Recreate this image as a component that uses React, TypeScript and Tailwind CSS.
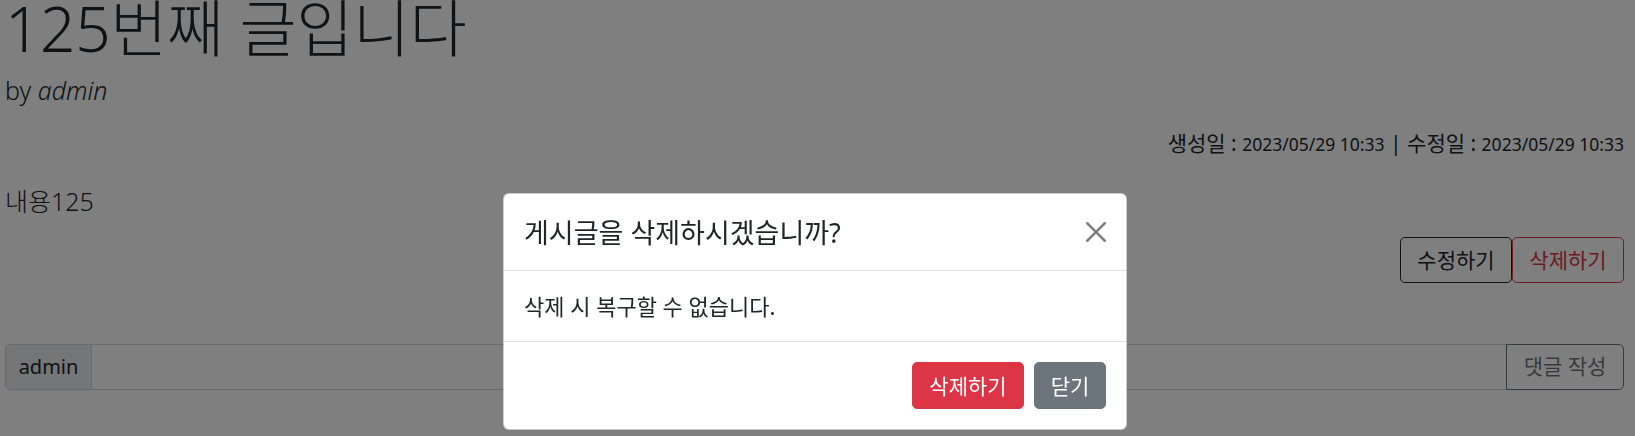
export default function App() {
  return (
    <div className="relative min-h-screen overflow-hidden bg-white font-['Noto_Sans','Noto_Sans_CJK_KR',sans-serif] text-[#212529]">
      {/* Post page */}
      <div className="flex flex-col pl-[5px] pr-[11px]">
        <h1 className="mt-[-9px] text-[62px] font-light leading-[74px] tracking-[-0.3px]">
          125번째 글입니다
        </h1>
        <p className="mt-[10px] text-[25px] font-light leading-[30px]">
          by <i>admin</i>
        </p>

        <p className="mt-[23px] text-right text-[21px] leading-[30px]">
          생성일 : <small className="text-[17.5px]">2023/05/29 10:33</small> | 수정일 :{" "}
          <small className="text-[17.5px]">2023/05/29 10:33</small>
        </p>

        <p className="mt-[23px] text-[25px] font-light leading-[38px]">내용125</p>

        <div className="mt-[17px] flex justify-end">
          <button className="w-[112px] rounded-[5px] border border-[#212529] py-[7px] text-[21px] leading-[30px] text-[#212529]">
            수정하기
          </button>
          <button className="w-[112px] rounded-[5px] border border-[#dc3545] py-[7px] text-[21px] leading-[30px] text-[#dc3545]">
            삭제하기
          </button>
        </div>

        <div className="mt-[61px] flex h-[46px]">
          <span className="flex w-[87px] items-center justify-center rounded-l-[5px] border border-[#ced4da] bg-[#e9ecef] text-[20px]">
            admin
          </span>
          <input className="min-w-0 flex-1 border-y border-[#ced4da] px-3 text-[20px] outline-none" />
          <button className="w-[118px] rounded-r-[5px] border border-[#6c757d] text-[21px] text-[#6c757d]">
            댓글 작성
          </button>
        </div>
      </div>

      {/* Backdrop */}
      <div className="fixed inset-0 bg-black/50" />

      {/* Modal */}
      <div className="fixed inset-0 flex justify-center pr-[5px] pt-[193px]">
        <div className="h-fit w-[624px] rounded-[6px] border border-black/20 bg-white">
          <div className="flex h-[77px] items-center justify-between border-b border-[#dee2e6] px-5">
            <h5 className="text-[27px] leading-[37px]">게시글을 삭제하시겠습니까?</h5>
            <svg viewBox="0 0 16 16" className="h-5 w-5 opacity-50" fill="#000">
              <path d="M.293.293a1 1 0 0 1 1.414 0L8 6.586 14.293.293a1 1 0 1 1 1.414 1.414L9.414 8l6.293 6.293a1 1 0 0 1-1.414 1.414L8 9.414l-6.293 6.293a1 1 0 0 1-1.414-1.414L6.586 8 .293 1.707a1 1 0 0 1 0-1.414z" />
            </svg>
          </div>
          <div className="flex h-[70px] items-center px-5 text-[22px] leading-[30px]">
            삭제 시 복구할 수 없습니다.
          </div>
          <div className="flex justify-end gap-[10px] border-t border-[#dee2e6] px-5 py-5">
            <button className="w-[112px] rounded-[5px] border border-[#dc3545] bg-[#dc3545] py-[7.5px] text-[21px] leading-[30px] text-white">
              삭제하기
            </button>
            <button className="w-[72px] rounded-[5px] border border-[#6c757d] bg-[#6c757d] py-[7.5px] text-[21px] leading-[30px] text-white">
              닫기
            </button>
          </div>
        </div>
      </div>
    </div>
  );
}
